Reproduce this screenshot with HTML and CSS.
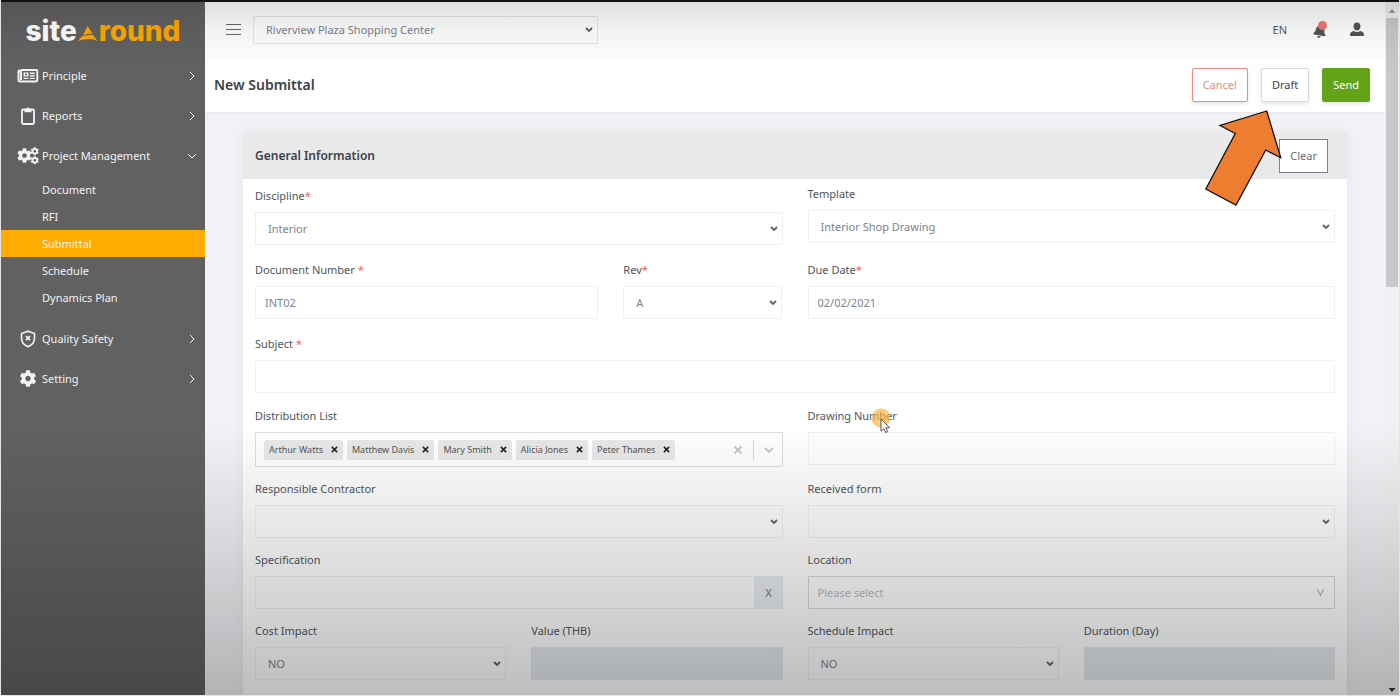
FILE: index.html
```
<!DOCTYPE html>
<html lang="en">
<head>
<meta charset="utf-8">
<title>New Submittal</title>
<link rel="stylesheet" href="styles.css">
</head>
<body>
<svg class="sprite" aria-hidden="true">
  <symbol id="cog" viewBox="0 0 512 512"><path d="M487.4 315.7l-42.6-24.6c4.3-23.2 4.3-47 0-70.2l42.6-24.6c4.9-2.8 7.1-8.6 5.5-14-11.1-35.6-30-67.8-54.7-94.6-3.8-4.1-10-5.1-14.8-2.3L380.8 110c-17.9-15.4-38.5-27.3-60.8-35.1V25.8c0-5.6-3.9-10.5-9.4-11.7-36.7-8.2-74.3-7.8-109.2 0-5.5 1.2-9.4 6.1-9.4 11.7V75c-22.2 7.9-42.8 19.8-60.8 35.1L88.7 85.500c-4.900-2.800-11-1.900-14.800 2.300-24.700 26.700-43.600 58.900-54.700 94.600-1.700 5.400.6 11.200 5.500 14L67.300 221c-4.300 23.200-4.300 47 0 70.200l-42.600 24.600c-4.900 2.800-7.100 8.600-5.500 14 11.100 35.600 30 67.800 54.700 94.600 3.800 4.100 10 5.100 14.800 2.300l42.600-24.600c17.900 15.400 38.500 27.300 60.800 35.100v49.200c0 5.600 3.900 10.500 9.400 11.700 36.700 8.200 74.300 7.800 109.200 0 5.500-1.200 9.400-6.100 9.400-11.700v-49.200c22.200-7.900 42.800-19.800 60.800-35.100l42.600 24.600c4.900 2.800 11 1.900 14.800-2.300 24.700-26.700 43.600-58.900 54.700-94.600 1.500-5.500-.7-11.300-5.600-14.100zM256 336c-44.100 0-80-35.900-80-80s35.900-80 80-80 80 35.900 80 80-35.900 80-80 80z"/></symbol>
  <symbol id="chevron" viewBox="0 0 10 10"><path d="M3 1l4 4-4 4" fill="none" stroke="currentColor" stroke-width="1"/></symbol>
</svg>

<div class="app">
  <aside class="sidebar">
    <a class="logo" href="#"><span>site</span><svg class="logo-mark" viewBox="0 0 20 16" aria-hidden="true"><path d="M9.500 1L14.500 8.500Q9 8.700 5 10.500z"/><path d="M3.800 11.500Q9 9.500 15 9.700L19.500 16Q12 12 0 16z"/></svg><span class="logo-accent">round</span></a>
    <nav class="nav">
      <button class="nav-item" type="button">
        <svg class="nav-icon" viewBox="0 0 22 18" aria-hidden="true"><path d="M4 3.500H2.500Q1.500 3.500 1.500 4.500V13Q1.500 14.500 3 14.500H18.500Q20.300 14.500 20.300 12.800V4Q20.300 3 19.300 3H5Q4 3 4 4V13" fill="none" stroke="currentColor" stroke-width="2"/><path d="M6.500 5.500h5v4h-5zM12.800 5.500h5v1.400h-5zM12.800 8.100h5v1.400h-5zM6.500 10.700h5v1.400h-5zM12.800 10.700h5v1.400h-5z" fill="currentColor"/><path d="M8 6.700h2v1.500h-2z" fill="#5f5f5f"/></svg>
        <span>Principle</span><svg class="nav-arrow"><use href="#chevron"/></svg>
      </button>
      <button class="nav-item" type="button">
        <svg class="nav-icon" viewBox="0 0 22 18" aria-hidden="true"><rect x="5" y="2.500" width="12" height="14.500" rx="1.200" fill="none" stroke="currentColor" stroke-width="1.800"/><path d="M7.500 2.300h1.700a1.800 1.800 0 0 1 3.600 0h1.700v2.900h-7z" fill="currentColor"/></svg>
        <span>Reports</span><svg class="nav-arrow"><use href="#chevron"/></svg>
      </button>
      <button class="nav-item" type="button" aria-expanded="true">
        <svg class="nav-icon" viewBox="0 0 22 18" fill="currentColor" aria-hidden="true"><use href="#cog" x="0" y="1" width="15" height="15"/><use href="#cog" x="13.500" y="0" width="8.500" height="8.500"/><use href="#cog" x="13.500" y="9" width="8.500" height="8.500"/></svg>
        <span>Project Management</span><svg class="nav-arrow nav-arrow-open"><use href="#chevron"/></svg>
      </button>
      <div class="subnav">
        <a href="#">Document</a>
        <a href="#">RFI</a>
        <a class="active" href="#" aria-current="page">Submittal</a>
        <a href="#">Schedule</a>
        <a href="#">Dynamics Plan</a>
      </div>
      <button class="nav-item" type="button">
        <svg class="nav-icon" viewBox="0 0 22 18" fill="none" stroke="currentColor" aria-hidden="true"><path d="M11 1.200L17.500 3.500V8Q17.500 14 11 16.800Q4.500 14 4.500 8V3.500z" stroke-width="1.600"/><path d="M9 6.200l4 4M13 6.200l-4 4" stroke-width="1.700"/></svg>
        <span>Quality Safety</span><svg class="nav-arrow"><use href="#chevron"/></svg>
      </button>
      <button class="nav-item" type="button">
        <svg class="nav-icon" viewBox="0 0 22 18" fill="currentColor" aria-hidden="true"><use href="#cog" x="2.500" y="0" width="17" height="17"/></svg>
        <span>Setting</span><svg class="nav-arrow"><use href="#chevron"/></svg>
      </button>
    </nav>
  </aside>

  <main class="main">
    <header class="topbar">
      <button class="menu-btn" type="button" aria-label="Menu"><svg viewBox="0 0 16 14" aria-hidden="true"><path d="M1 1.500h15M1 6.500h15M1 11.500h15" stroke="currentColor" stroke-width="1.200"/></svg></button>
      <select class="control project" aria-label="Project"><option>Riverview Plaza Shopping Center</option></select>
      <div class="topbar-tools">
        <button class="lang" type="button">EN</button>
        <button class="tool bell" type="button" aria-label="Notifications"><svg viewBox="0 0 448 512" aria-hidden="true"><path transform="rotate(10 224 256)" d="M224 512c35.320 0 63.970-28.650 63.970-64H160.030c0 35.350 28.650 64 63.970 64zm215.390-149.710c-19.320-20.760-55.470-51.990-55.470-154.290 0-77.700-54.480-139.900-127.940-155.160V32c0-17.670-14.320-32-31.980-32s-31.980 14.330-31.980 32v20.840C118.560 68.100 64.080 130.300 64.080 208c0 102.300-36.150 133.530-55.470 154.290-6 6.450-8.660 14.160-8.610 21.710.11 16.400 12.980 32 32.100 32h383.800c19.120 0 32-15.600 32.100-32 .05-7.550-2.610-15.270-8.610-21.710z"/></svg><span class="badge"></span></button>
        <button class="tool" type="button" aria-label="Account"><svg viewBox="0 0 448 512" aria-hidden="true"><path d="M224 272c62 0 112-61 112-136S294 16 224 16 112 61 112 136s50 136 112 136zm100 16c-30 22-62 32-100 32s-70-10-100-32C50 296 0 340 0 396v22c0 18 14 32 32 32h384c18 0 32-14 32-32v-22c0-56-50-100-124-108z"/></svg></button>
      </div>
    </header>

    <div class="titlebar">
      <h1>New Submittal</h1>
      <div class="actions">
        <button class="btn btn-cancel" type="button">Cancel</button>
        <button class="btn" type="button">Draft</button>
        <button class="btn btn-send" type="button">Send</button>
      </div>
    </div>

    <form class="card">
      <div class="card-head">
        <h2>General Information</h2>
        <button class="btn btn-clear" type="reset">Clear</button>
      </div>
      <div class="card-body">
        <div class="row">
          <div class="field required half"><label for="discipline">Discipline<i>*</i></label><select class="control" id="discipline"><option>Interior</option></select></div>
          <div class="field half"><label for="template">Template</label><select class="control" id="template"><option>Interior Shop Drawing</option></select></div>
        </div>
        <div class="row">
          <div class="half split">
            <div class="field required"><label for="docno">Document Number <i>*</i></label><input class="control" id="docno" type="text" value="INT02"></div>
            <div class="field required"><label for="rev">Rev<i>*</i></label><select class="control" id="rev"><option>A</option></select></div>
          </div>
          <div class="field required half"><label for="due">Due Date<i>*</i></label><input class="control" id="due" type="text" value="02/02/2021"></div>
        </div>
        <div class="row">
          <div class="field required full"><label for="subject">Subject <i>*</i></label><input class="control" id="subject" type="text"></div>
        </div>
        <div class="row row-tight">
          <div class="field half">
            <label for="dist">Distribution List</label>
            <div class="control tags">
              <span class="tag">Arthur Watts<button type="button" aria-label="Remove Arthur Watts"><svg viewBox="0 0 8 8"><path d="M1 1l6 6M7 1L1 7"/></svg></button></span>
              <span class="tag">Matthew Davis<button type="button" aria-label="Remove Matthew Davis"><svg viewBox="0 0 8 8"><path d="M1 1l6 6M7 1L1 7"/></svg></button></span>
              <span class="tag">Mary Smith<button type="button" aria-label="Remove Mary Smith"><svg viewBox="0 0 8 8"><path d="M1 1l6 6M7 1L1 7"/></svg></button></span>
              <span class="tag">Alicia Jones<button type="button" aria-label="Remove Alicia Jones"><svg viewBox="0 0 8 8"><path d="M1 1l6 6M7 1L1 7"/></svg></button></span>
              <span class="tag">Peter Thames<button type="button" aria-label="Remove Peter Thames"><svg viewBox="0 0 8 8"><path d="M1 1l6 6M7 1L1 7"/></svg></button></span>
              <input class="tag-input" id="dist" type="text">
              <button class="tags-clear" type="button" aria-label="Clear all"><svg viewBox="0 0 10 10"><path d="M1.500 1.500l7 7M8.500 1.500l-7 7"/></svg></button>
              <button class="tags-open" type="button" aria-label="Open list"><svg viewBox="0 0 10 10"><path d="M1 3l4 4 4-4"/></svg></button>
            </div>
          </div>
          <div class="field half"><label for="drawing">Drawing Number</label><input class="control" id="drawing" type="text">
            <svg class="pointer" viewBox="0 0 22 26" aria-hidden="true"><circle cx="11" cy="11" r="9.500" fill="#f9b233" fill-opacity=".65"/><path d="M11 12V24.200L13.800 21.600L15.700 25.500L17.700 24.600L15.900 20.800H19.600z" fill="#fff" stroke="#555" stroke-width="1"/></svg>
          </div>
        </div>
        <div class="row row-tight">
          <div class="field half"><label for="contractor">Responsible Contractor</label><select class="control" id="contractor"><option></option></select></div>
          <div class="field half"><label for="received">Received form</label><select class="control" id="received"><option></option></select></div>
        </div>
        <div class="row row-tight">
          <div class="field half"><label for="spec">Specification</label><div class="addon"><input class="control" id="spec" type="text"><button type="button">X</button></div></div>
          <div class="field half"><label for="location">Location</label><div class="control combo"><input id="location" type="text" placeholder="Please select"><svg viewBox="0 0 10 10" aria-hidden="true"><path d="M1.500 1l3.500 7 3.500-7"/></svg></div></div>
        </div>
        <div class="row row-tight">
          <div class="field"><label for="cost">Cost Impact</label><select class="control" id="cost"><option>NO</option></select></div>
          <div class="field"><label for="value">Value (THB)</label><input class="control" id="value" type="text" disabled></div>
          <div class="field"><label for="sched">Schedule Impact</label><select class="control" id="sched"><option>NO</option></select></div>
          <div class="field"><label for="duration">Duration (Day)</label><input class="control" id="duration" type="text" disabled></div>
        </div>
      </div>
    </form>
  </main>

  <div class="scrollbar" aria-hidden="true">
    <svg viewBox="0 0 8 6"><path d="M4 1l3.500 4h-7z" fill="#999"/></svg>
    <div class="thumb"></div>
    <svg viewBox="0 0 8 6"><path d="M4 5l3.500-4h-7z" fill="#333"/></svg>
  </div>
</div>

<svg class="callout" viewBox="0 0 78 98" aria-hidden="true"><path d="M62.700 2L16 16.500L31.300 24.500L1.800 80L32 96L61.700 41L76.700 48.500z"/></svg>
</body>
</html>
```
FILE: styles.css
```
* { box-sizing: border-box; }

body {
  margin: 0;
  height: 100vh;
  overflow: hidden;
  font: 11px/18px "Noto Sans", "Open Sans", sans-serif;
  color: #50555c;
  background: #e4e4e4;
}

button, input, select { font: inherit; color: inherit; margin: 0; }
button { padding: 0; border: 0; background: none; cursor: pointer; }
a { color: inherit; text-decoration: none; }
h1, h2 { margin: 0; font-weight: 600; color: #3b424a; }

.sprite { position: absolute; width: 0; height: 0; }

.app {
  position: relative;
  display: flex;
  height: calc(100vh - 1px);
  margin: 0 1px;
  border-top: 2px solid #111;
  overflow: hidden;
}

/* Shading over the whole frame */
.app::after {
  content: "";
  position: absolute;
  inset: 0;
  pointer-events: none;
  background:
    linear-gradient(rgba(0, 0, 0, .13), rgba(0, 0, 0, .05) 28px, transparent 68px),
    linear-gradient(transparent 61%, rgba(0, 0, 0, .1) 77%, rgba(0, 0, 0, .26));
}

/* Sidebar */
.sidebar { flex: 0 0 204px; background: #616161; color: #f3f3f3; }

.logo {
  display: flex;
  align-items: baseline;
  justify-content: center;
  height: 54px;
  padding-top: 11px;
  font: 800 28px/36px Inter, sans-serif;
  color: #fff;
}
.logo-accent { color: #ffa800; }
.logo-mark { width: 20px; height: 16px; margin: 0 1px; fill: #ffa800; }

.nav-item {
  display: flex;
  align-items: center;
  gap: 3px;
  width: 100%;
  height: 40px;
  padding: 0 8px 0 16px;
  text-align: left;
}
.nav-item span { flex: 1; }
.nav-icon { width: 22px; height: 18px; }
.nav-arrow { width: 10px; height: 10px; }
.nav-arrow-open { transform: rotate(90deg); }

.subnav { padding-bottom: 8px; }
.subnav a { display: block; padding-left: 41px; line-height: 27px; }
.subnav .active { background: #ffab00; }

/* Main column */
.main { flex: 1; min-width: 0; background: #f1f2f5; }

.topbar {
  display: flex;
  align-items: center;
  height: 56px;
  padding: 0 21px 0 20px;
  background: #fff;
}
.menu-btn { width: 16px; height: 14px; color: #666; }
.menu-btn svg { display: block; }
.topbar .project { width: 345px; height: 28px; margin-left: 12px; border-color: #e6e7e9; }
.topbar-tools {
  display: flex;
  align-items: center;
  gap: 23px;
  margin-left: auto;
  color: #555;
}
.tool { position: relative; width: 14px; height: 16px; }
.tool svg { display: block; width: 14px; height: 16px; fill: #555; }
.bell svg { width: 14px; height: 14px; margin-top: 2px; }
.lang { margin-right: 3px; }
.badge {
  position: absolute;
  top: -1px;
  right: 0;
  width: 9px;
  height: 9px;
  border-radius: 50%;
  background: #ee7777;
}

.titlebar {
  display: flex;
  align-items: center;
  justify-content: space-between;
  height: 54px;
  padding: 0 15px 0 9px;
  background: #fff;
  box-shadow: 0 1px 3px rgba(0, 0, 0, .06);
}
.titlebar h1 { font-size: 14px; }
.actions { display: flex; gap: 13px; }

.btn {
  height: 34px;
  padding: 0 10px;
  border: 1px solid #d8dade;
  border-radius: 2px;
  background: #fff;
  color: #3b424a;
  box-shadow: 0 2px 4px rgba(0, 0, 0, .1);
}
.btn-cancel { border-color: #e88a7d; color: #e88a7d; }
.btn-send { border-color: #62a31a; background: #62a31a; color: #fff; }
.btn-clear { border-color: #7d8090; border-radius: 0; color: #6a6e78; box-shadow: none; }

/* Card */
.card {
  margin: 20px 38px 0;
  background: #fff;
  box-shadow: 0 0 12px rgba(0, 0, 0, .05);
}
.card-head {
  display: flex;
  align-items: center;
  justify-content: space-between;
  height: 47px;
  padding: 0 19px 0 12px;
  background: #e9e9e9;
}
.card-head h2 { font-size: 12px; }
.card-body { padding: 6px 12px 40px; }

.row {
  display: grid;
  grid-template-columns: repeat(4, 1fr);
  gap: 25px;
  margin-bottom: 14px;
}
.row-tight { margin-bottom: 13px; }
.half { grid-column: span 2; }
.full { grid-column: span 4; }
.split { display: grid; grid-template-columns: 343fr 159fr; gap: 25px; }

.field { position: relative; display: flex; flex-direction: column; min-width: 0; }
.field label { margin-bottom: 7px; }
.required label { padding-top: 2px; }
.field i { font-style: normal; color: #f0625d; }

.control {
  width: 100%;
  height: 33px;
  padding: 0 9px;
  border: 1px solid #eff0f2;
  border-radius: 1px;
  background: transparent;
  color: #7c8293;
  outline: 0;
}
select.control {
  appearance: none;
  padding: 0 24px 0 12px;
  background: url("data:image/svg+xml,%3Csvg xmlns='http://www.w3.org/2000/svg' width='8' height='6'%3E%3Cpath d='M1 1l3 3 3-3' fill='none' stroke='%23566' stroke-width='1.8'/%3E%3C/svg%3E") no-repeat right 4px center;
}
.control:disabled { background: #e4e9ed; border-color: #e4e9ed; }

.tags {
  display: flex;
  align-items: center;
  gap: 4px;
  height: 35px;
  padding: 0 8px;
  border-color: #dcdfe1;
}
.tag {
  display: flex;
  align-items: center;
  gap: 8px;
  height: 20px;
  padding: 0 5px;
  border-radius: 2px;
  background: #e8e8e8;
  font-size: 9px;
  white-space: nowrap;
  color: #555;
}
.tag button, .tags-clear, .tags-open { display: flex; }
.tag svg { width: 7px; height: 7px; stroke: #222; stroke-width: 1.8; }
.tag-input { flex: 1; min-width: 0; border: 0; background: none; outline: 0; }
.tags-clear svg, .tags-open svg { width: 10px; height: 10px; fill: none; stroke: #c4c4c4; stroke-width: 1.8; }
.tags-open { align-items: center; height: 20px; margin-left: 6px; padding-left: 10px; border-left: 1px solid #d8d8d8; }

.addon { display: flex; }
.addon button { flex: 0 0 28px; border: 1px solid #e4e9ed; background: #e9eef3; color: #6b7284; }

.combo { display: flex; align-items: center; border-color: #d6d8da; }
.combo input { flex: 1; min-width: 0; padding: 0; border: 0; background: none; outline: 0; }
.combo input::placeholder { color: #b9bbbf; }
.combo svg { width: 9px; height: 9px; fill: none; stroke: #b0b0b0; stroke-width: 1.2; }

.pointer { position: absolute; left: 62px; top: 0; width: 22px; height: 26px; }

/* Scrollbar */
.scrollbar {
  display: flex;
  flex-direction: column;
  align-items: center;
  flex: 0 0 14px;
  padding: 6px 1px 2px;
  background: #f1f1f1;
}
.scrollbar svg { width: 8px; height: 6px; }
.thumb { width: 12px; height: 269px; margin: 4px 0 auto; background: #c8c8c8; }

/* Arrow pointing at the Draft button */
.callout {
  position: absolute;
  top: 109px;
  right: 118px;
  width: 78px;
  height: 98px;
  fill: #ed7d31;
  stroke: #111;
  stroke-width: 1.3;
}
```
